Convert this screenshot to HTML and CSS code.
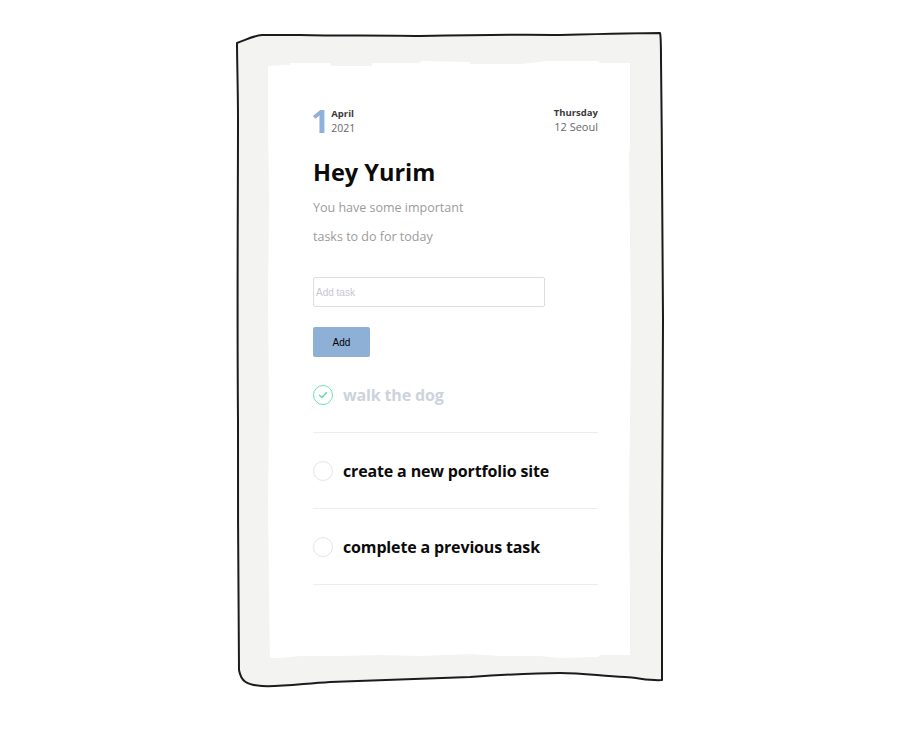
FILE: index.html
```html
<!DOCTYPE html>
<html lang="en">
<head>
<meta charset="utf-8">
<title>Todo</title>
<link rel="stylesheet" href="styles.css">
</head>
<body>
<div class="paper">
  <svg class="frame" width="432" height="664" viewBox="234 28 432 664" aria-hidden="true">
    <path class="frame-fill" d="M237,43 C246,40 252,36 262,35 L300,35 C340,36 380,35 420,36 C470,35 520,34 560,35 C600,34 640,33 660,33 C661,36 661,42 661,60 C662,150 663,250 663,320 C663,400 662,480 662,560 C662,620 662,660 662,680 C650,681 640,678 625,677 C600,676 585,673 560,673 C530,673 500,675 470,677 C430,678 380,680 330,682 C300,684 280,687 262,686 C246,685 241,681 239,670 C238,600 238,500 238,420 C237,300 238,200 238,120 C238,90 237,60 237,43 Z"/>
    <path class="paper-white" d="M268,66 L290,65 L290,63 L330,63 L331,66 L372,66 L372,63 L420,63 L421,61 L470,62 L470,64 L520,64 L548,61 L598,61 L600,63 L630,63 L630,150 L629,152 L630,240 L631,330 L630,420 L629,500 L630,600 L630,655 L600,655 L598,657 L560,658 L540,656 L500,656 L470,654 L420,656 L380,655 L340,656 L300,656 L280,658 L270,658 L269,600 L268,500 L269,420 L268,300 L269,200 L268,120 Z"/>
    <path class="frame-line" d="M237,43 C246,40 252,36 262,35 L300,35 C340,36 380,35 420,36 C470,35 520,34 560,35 C600,34 640,33 660,33 C661,36 661,42 661,60 C662,150 663,250 663,320 C663,400 662,480 662,560 C662,620 662,660 662,680 C650,681 640,678 625,677 C600,676 585,673 560,673 C530,673 500,675 470,677 C430,678 380,680 330,682 C300,684 280,687 262,686 C246,685 241,681 239,670 C238,600 238,500 238,420 C237,300 238,200 238,120 C238,90 237,60 237,43 Z"/>
  </svg>

  <div class="content">
    <header class="header">
      <div class="date">
        <span class="day">1</span>
        <div class="date-meta">
          <span class="strong">April</span>
          <span class="light">2021</span>
        </div>
      </div>
      <div class="place">
        <span class="strong">Thursday</span>
        <span class="light">12 Seoul</span>
      </div>
    </header>

    <h1 class="title">Hey Yurim</h1>
    <p class="subtitle">You have some important<br>tasks to do for today</p>

    <form class="add-form">
      <input class="task-input" type="text" placeholder="Add task">
      <button class="add-btn" type="button">Add</button>
    </form>

    <ul class="tasks">
      <li class="task done">
        <span class="check">
          <svg width="10" height="8" viewBox="0 0 10 8"><path d="M1.5,4.2 L4,6.5 L8.5,1.5" fill="none" stroke="#5fd9a8" stroke-width="1.3" stroke-linecap="round" stroke-linejoin="round"/></svg>
        </span>
        <span class="task-text">walk the dog</span>
      </li>
      <li class="task">
        <span class="check"></span>
        <span class="task-text">create a new portfolio site</span>
      </li>
      <li class="task">
        <span class="check"></span>
        <span class="task-text">complete a previous task</span>
      </li>
    </ul>
  </div>
</div>
</body>
</html>
```

FILE: styles.css
```css
* { box-sizing: border-box; }

html, body {
  margin: 0;
  padding: 0;
  background: #ffffff;
}

body {
  font-family: "Open Sans", "Noto Sans CJK KR", sans-serif;
  color: #111;
}

.paper {
  position: relative;
  width: 432px;
  height: 664px;
  margin: 28px auto 0;
}

.frame {
  position: absolute;
  left: 0;
  top: 0;
}

.frame-fill { fill: #f3f3f2; stroke: none; }
.paper-white { fill: #ffffff; stroke: none; }
.frame-line { fill: none; stroke: #1b1b1b; stroke-width: 2; stroke-linejoin: round; }

.content {
  position: relative;
  padding: 78px 68px 0 79px;
}

.header {
  display: flex;
  justify-content: space-between;
  align-items: flex-start;
}

.date {
  display: flex;
  align-items: center;
  gap: 2px;
}

.day {
  font-family: "Open Sans", sans-serif;
  font-size: 32px;
  font-weight: 700;
  color: #8fb1d9;
  line-height: 30px;
  margin-left: -2px;
}

.date-meta, .place {
  display: flex;
  flex-direction: column;
  line-height: 14px;
}

.place { align-items: flex-end; }

.strong {
  font-size: 9.5px;
  font-weight: 700;
  color: #3a3a3a;
}

.light {
  font-size: 10.5px;
  color: #666;
}

.place .light { font-size: 11px; }

.title {
  margin: 20px 0 0;
  font-size: 23.5px;
  font-weight: 700;
  line-height: 32px;
  color: #0b0b0b;
}

.subtitle {
  margin: 5px 0 0;
  font-size: 12.5px;
  line-height: 29px;
  color: #9b9b9b;
}

.add-form {
  display: flex;
  flex-direction: column;
  align-items: flex-start;
  gap: 20px;
  margin-top: 26px;
}

.task-input {
  width: 232px;
  height: 30px;
  border: 1px solid #dcdce2;
  border-radius: 2px;
  padding: 0 2px;
  font-family: "Liberation Sans", Arial, sans-serif;
  font-size: 10px;
  outline: none;
}

.task-input::placeholder { color: #c9c6d6; }

.add-btn {
  width: 57px;
  height: 30px;
  border: none;
  border-radius: 2px;
  background: #8fb0d6;
  font-family: "Liberation Sans", Arial, sans-serif;
  font-size: 10px;
  color: #000;
  padding: 0;
}

.tasks {
  list-style: none;
  margin: 0;
  padding: 0;
}

.task {
  display: flex;
  align-items: center;
  gap: 10px;
  height: 76px;
  border-bottom: 1px solid #ededed;
}

.check {
  width: 20px;
  height: 20px;
  border-radius: 50%;
  border: 1.5px solid #e4e4ea;
  display: flex;
  align-items: center;
  justify-content: center;
  flex-shrink: 0;
}

.done .check { border-color: #6fe0b5; }

.task-text {
  font-size: 16px;
  font-weight: 700;
  letter-spacing: -0.15px;
  color: #0b0b0b;
}

.done .task-text { color: #ccd3dc; }
```
